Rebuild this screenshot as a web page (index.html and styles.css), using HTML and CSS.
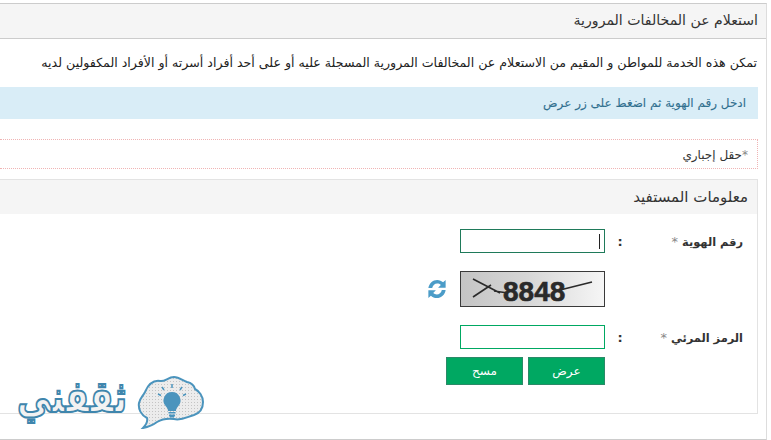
FILE: index.html
```html
<!DOCTYPE html>
<html lang="ar" dir="rtl">
<head>
<meta charset="utf-8">
<title>استعلام عن المخالفات المرورية</title>
<link rel="stylesheet" href="styles.css">
</head>
<body>
<main class="page">
  <h1 class="page-head">استعلام عن المخالفات المرورية</h1>
  <p class="intro">تمكن هذه الخدمة للمواطن و المقيم من الاستعلام عن المخالفات المرورية المسجلة عليه أو على أحد أفراد أسرته أو الأفراد المكفولين لديه</p>
  <div class="notice">ادخل رقم الهوية ثم اضغط على زر عرض</div>
  <div class="required"><span class="star">*</span>حقل إجباري</div>
  <section class="panel">
    <h2 class="panel-head">معلومات المستفيد</h2>
    <form class="form">
      <div class="row row-id">
        <label class="label">رقم الهوية <span class="star">*</span></label>
        <span class="colon">:</span>
        <div class="field"><span class="input focused"><i class="caret"></i></span></div>
      </div>
      <div class="row row-captcha">
        <span class="label"></span>
        <span class="colon"></span>
        <div class="field captcha-field">
          <svg class="captcha" width="145" height="36" viewBox="0 0 145 36">
            <defs><linearGradient id="cg" x1="0" x2="1" y1="0" y2="0"><stop offset="0" stop-color="#c4c4c4"/><stop offset="0.45" stop-color="#d6d6d6"/><stop offset="1" stop-color="#f6f6f6"/></linearGradient></defs>
            <rect x="0.5" y="0.5" width="144" height="35" fill="url(#cg)" stroke="#3a3a3a"/>
            <text class="captcha-text" x="43" y="30" direction="ltr">8848</text>
            <path d="M13 8 L40 22 M13 26 L31 14 M34 20 L48 22 M100 19 L132 11" stroke="#2a2a2a" stroke-width="1.600" fill="none"/>
          </svg>
          <svg class="refresh" width="20" height="20" viewBox="0 0 22 22">
            <path d="M1.500 10 C2.200 4.800 6.400 1 11.200 1 c2.600 0 4.900 1 6.500 2.600 L20.500 1 V9.500 h-8.300 l3-3 C14.100 5.500 12.800 5 11.200 5 8.600 5 6.400 6.900 5.700 10 Z" fill="#4b9cc8"/>
            <path d="M20.500 12 C19.800 17.200 15.600 21 10.800 21 c-2.600 0-4.900-1-6.500-2.600 L1.500 21 V12.500 h8.300 l-3 3 c1.100 1 2.400 1.500 4 1.500 2.600 0 4.800-1.900 5.500-5 Z" fill="#4b9cc8"/>
          </svg>
        </div>
      </div>
      <div class="row row-code">
        <label class="label">الرمز المرئي <span class="star">*</span></label>
        <span class="colon">:</span>
        <div class="field"><span class="input"></span></div>
      </div>
      <div class="actions">
        <button type="button" class="btn">عرض</button>
        <button type="button" class="btn">مسح</button>
      </div>
    </form>
  </section>
</main>
<div class="brand">
  <svg class="bulb" width="68" height="54" viewBox="0 0 68 54">
    <defs><pattern id="dots" width="3" height="3" patternUnits="userSpaceOnUse"><rect width="3" height="3" fill="#ececec"/><rect width="1" height="1" fill="#c4c4c4"/></pattern></defs>
    <path d="M10 43 C4 40 1 34 2 28 C3 23 6 21 8 17 C11 10 16 5 23 6 C28 7 31 2 37 2 C42 2 45 5 50 7 C55 8 57 10 58 14 C62 16 66 21 66 27 C66 33 63 38 57 40 C50 42 44 46 37 44 C30 43 25 44 20 47 C16 50 11 52 6 53 C9 50 11 47 10 43 Z" fill="url(#dots)" stroke="#4b94bd" stroke-width="2"/>
    <path d="M35 17 a8.500 8.500 0 0 1 6 14.500 c-1.500 1.500-2 3-2 4.500 h-8 c0-1.500-.5-3-2-4.500 A8.500 8.500 0 0 1 35 17 Z" fill="#4b94bd"/>
    <path d="M31.500 37 h7 v1.500 h-7 Z M32 39.500 h6 v1.500 l-1.500 1.500 h-3 l-1.500-1.500 Z" fill="#4b94bd"/>
    <path d="M35 9 v4 M25 12 l2 3 M45 12 l-2 3 M21 19 l3 1.500 M49 19 l-3 1.500" stroke="#4b94bd" stroke-width="1.500" fill="none"/>
  </svg>
  <span class="brand-name">ثقفني</span>
</div>
</body>
</html>
```
FILE: styles.css
```css
* { box-sizing: border-box; }
html, body { margin: 0; padding: 0; }
body {
  width: 771px;
  height: 440px;
  background: #fff;
  color: #333;
  font-family: "DejaVu Sans", "Noto Sans", sans-serif;
  font-size: 12px;
  overflow: hidden;
  position: relative;
}
.page {
  height: 437px;
  margin: 3px 4px 0 0;
  border-top: 1px solid #ccc;
  border-right: 1px solid #ddd;
  border-bottom: 1px solid #ccc;
}
.page-head {
  margin: 0;
  height: 35px;
  line-height: 33px;
  font-size: 14.100px;
  font-weight: normal;
  color: #333;
  padding-right: 8px;
  background: #f5f5f5;
  border-bottom: 1px solid #ccc;
}
.intro {
  margin: 0;
  height: 48px;
  line-height: 47px;
  padding-right: 9px;
  font-size: 12.600px;
  color: #222;
}
.notice {
  margin-right: 8px;
  height: 32px;
  line-height: 32px;
  padding-right: 12px;
  font-size: 12px;
  background: #d9edf7;
  color: #31708f;
  -webkit-text-stroke: 0.100px #31708f;
}
.required {
  margin: 20px 8px 0 0;
  height: 30px;
  line-height: 30px;
  padding-right: 9px;
  border-top: 1px dotted #f0b4b4;
  border-right: 1px dotted #f0b4b4;
  border-bottom: 1px dotted #f0b4b4;
  color: #333;
}
.star { color: #888; }
.panel {
  margin: 10px 8px 0 0;
  height: 235px;
  border: 1px solid #e3e3e3;
  border-left: 0;
}
.panel-head {
  margin: 0;
  height: 34px;
  line-height: 34px;
  padding-right: 9px;
  font-size: 15px;
  font-weight: normal;
  background: #f5f5f5;
  color: #333;
}
.form { padding-top: 15px; }
.row { display: flex; align-items: center; }
.row-id { height: 24px; }
.row-captcha { height: 36px; margin-top: 18px; }
.row-code { height: 24px; margin-top: 18px; }
.label {
  width: 128px;
  padding-right: 14px;
  font-size: 11.400px;
  font-weight: bold;
  color: #333;
}
.label .star { font-weight: normal; font-size: 13px; }
.colon {
  width: 18px;
  font-size: 13px;
  font-weight: bold;
  text-align: center;
}
.field { margin-right: 6px; }
.input {
  display: flex;
  align-items: center;
  width: 145px;
  height: 24px;
  background: #fff;
  border: 1px solid #00a862;
}
.input.focused { border-color: #1f7a5a; }
.caret {
  display: block;
  width: 1px;
  height: 15px;
  margin-right: 4px;
  background: #222;
}
.captcha-field { display: flex; align-items: center; gap: 13px; }
.captcha-text {
  font-family: "Liberation Sans", sans-serif;
  font-size: 28px;
  font-weight: bold;
  fill: #2a2a2a;
  stroke: #2a2a2a;
  stroke-width: 0.600px;
}
.refresh { display: block; }
.actions {
  display: flex;
  gap: 5px;
  margin: 8px 152px 0 0;
}
.btn {
  width: 77px;
  height: 28px;
  padding: 0;
  font-family: inherit;
  font-size: 12px;
  color: #fff;
  background: #00a862;
  border: 1px solid #2b8a68;
}
.brand {
  position: absolute;
  left: 17px;
  top: 375px;
  width: 188px;
  height: 54px;
  display: flex;
  flex-direction: row-reverse;
  justify-content: space-between;
  direction: ltr;
}
.bulb { display: block; }
.brand-name {
  direction: rtl;
  font-family: "DejaVu Sans", sans-serif;
  font-size: 34px;
  font-weight: bold;
  line-height: 46px;
  color: #f2f2f2;
  -webkit-text-stroke: 1.600px #3f86ad;
  transform: scaleY(1.300);
}
```
